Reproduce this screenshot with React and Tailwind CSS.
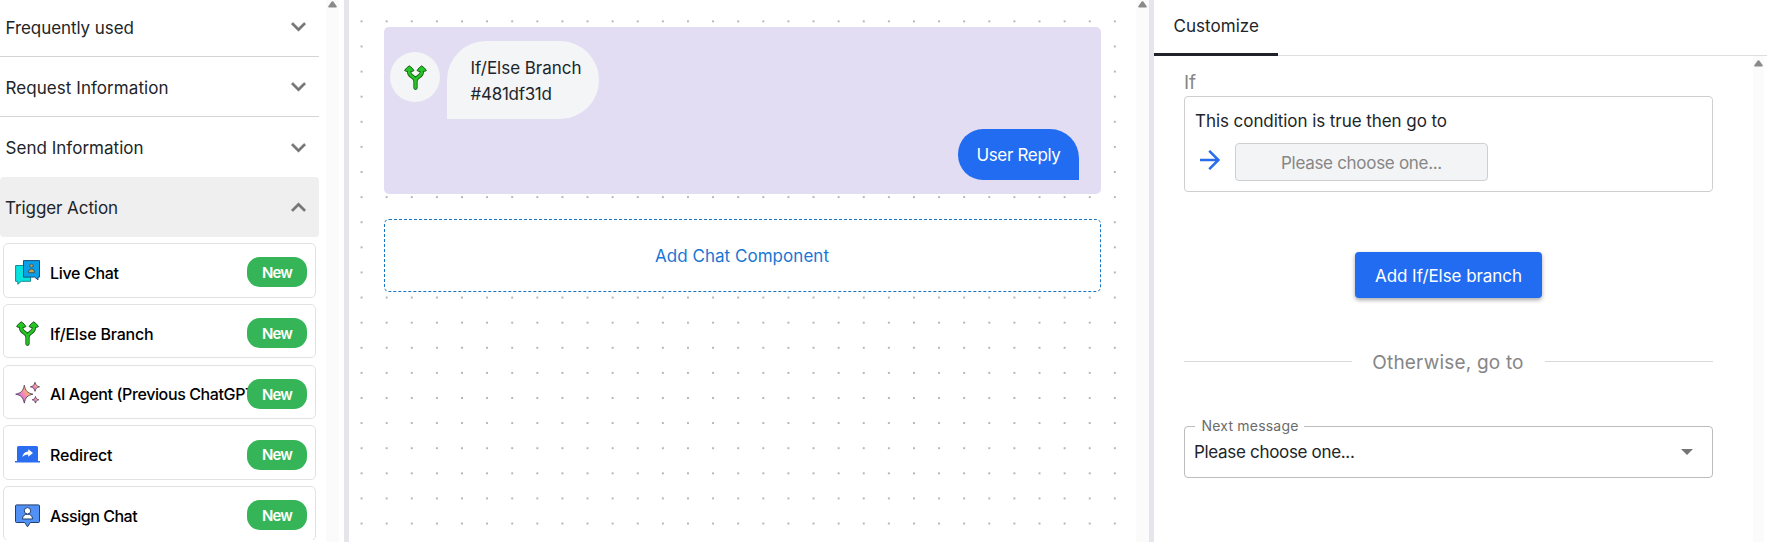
import React from "react";

function Chevron({ up }) {
  return (
    <svg
      viewBox="0 0 24 24"
      className={up ? "size-[29px] rotate-180" : "size-[29px]"}
      fill="#757575"
      stroke="#757575"
      strokeWidth=".4"
    >
      <path d="M16.59 8.59 12 13.17 7.41 8.59 6 10l6 6 6-6z" />
    </svg>
  );
}

function BranchIcon() {
  return (
    <svg viewBox="0 0 25 25" className="size-[25px] shrink-0" fill="none" strokeLinejoin="round">
      <path d="M12.500 22.800v-7.300M6.200 5.500v1.800c0 4.600 6.300 4 6.300 9M18.800 5.500v1.800c0 4.600-6.300 4-6.300 9" stroke="#1c5a1c" strokeWidth="4.300" strokeLinecap="round" />
      <path d="M1.600 5.500Q3 3 6.300.8 9.500 3 11 5.500q-1.500 1.500-4.700.8-3.200.7-4.700-.8zM23.400 5.500Q22 3 18.700.8 15.500 3 14 5.500q1.500 1.500 4.700.8 3.200.7 4.700-.8z" fill="#27c627" stroke="#1c5a1c" strokeWidth="1" />
      <path d="M12.500 22.800v-7.300M6.200 5v2.300c0 4.600 6.300 4 6.300 9M18.800 5v2.300c0 4.600-6.300 4-6.300 9" stroke="#27c627" strokeWidth="2.500" strokeLinecap="round" />
    </svg>
  );
}

function LiveChatIcon() {
  return (
    <svg viewBox="0 0 25 25" className="mt-px size-[25px] shrink-0" strokeLinejoin="round">
      <path d="M.6 5.500h15v15.800H6.200L2.800 24.300v-3H.6z" fill="#06e3dd" stroke="#1a8794" strokeWidth="1" />
      <path d="M8.500.6h16v16.500H23v2.700l-3.400-2.700H8.500z" fill="#0b9fe8" stroke="#14507e" strokeWidth="1" />
      <circle cx="16.500" cy="5.700" r="1.700" fill="#b3a45c" stroke="#34505c" strokeWidth=".8" />
      <path d="M13.500 12.700c0-2.300.8-3.700 3-3.700s3 1.400 3 3.700z" fill="#c0aa50" stroke="#34505c" strokeWidth=".9" />
    </svg>
  );
}

function SparkleIcon() {
  return (
    <svg viewBox="0 0 25 25" className="size-[25px] shrink-0" stroke="#4a3450" strokeWidth=".8" strokeLinejoin="round">
      <defs>
        <linearGradient id="sparkle" x1=".1" y1=".8" x2=".9" y2=".2">
          <stop offset=".1" stopColor="#c06cf5" />
          <stop offset=".45" stopColor="#f087b4" />
          <stop offset=".85" stopColor="#ffc860" />
        </linearGradient>
      </defs>
      <path d="M9.300 4.300c1.300 5.900 3 7.600 8.600 8.900-5.600 1.300-7.300 3-8.600 8.900-1.300-5.900-3-7.600-8.600-8.900 5.600-1.300 7.300-3 8.600-8.900z" fill="url(#sparkle)" />
      <path d="M20 1.300c.7 2.800 1.700 3.800 4.500 4.500-2.800.7-3.800 1.700-4.500 4.500-.7-2.800-1.700-3.800-4.500-4.500 2.800-.7 3.800-1.700 4.500-4.500z" fill="url(#sparkle)" />
      <path d="M20.500 15.500c.5 2.100 1.200 2.800 3.300 3.300-2.100.5-2.800 1.200-3.300 3.300-.5-2.100-1.200-2.800-3.300-3.300 2.100-.5 2.800-1.200 3.300-3.300z" fill="url(#sparkle)" />
    </svg>
  );
}

function RedirectIcon() {
  return (
    <svg viewBox="0 0 25 25" className="size-[25px] shrink-0">
      <path d="M3.500 4h18A1.500 1.500 0 0 1 23 5.500V19h2v1.600H0V19h2V5.500A1.500 1.500 0 0 1 3.500 4z" fill="#2a6df0" />
      <path d="M13.200 7.200 18 11l-4.800 3.800v-2.400c-2.800 0-4.500.8-5.900 2.800.4-3.400 2.500-5.400 5.900-5.700z" fill="#fff" />
    </svg>
  );
}

function AssignIcon() {
  return (
    <svg viewBox="0 0 25 25" className="mt-[2px] size-[25px] shrink-0" stroke="#243f6e" strokeWidth="1" strokeLinejoin="round">
      <path d="M1.500.9h22a1 1 0 0 1 1 1v15.600a1 1 0 0 1-1 1h-8.200l-2.800 4.300-2.800-4.300H1.500a1 1 0 0 1-1-1V1.900a1 1 0 0 1 1-1z" fill="#5190f4" />
      <path d="M7.500 15c0-3 1.800-4.800 5-4.800s5 1.800 5 4.800z" fill="#fff" />
      <circle cx="12.500" cy="6.800" r="3.200" fill="#fff" />
    </svg>
  );
}

function ScrollArrow() {
  return (
    <svg viewBox="0 0 9 7" className="h-[7px] w-[9px]" fill="#8a8a8a">
      <path d="M3.700.6Q4.500-.3 5.300.6L8.700 5.200Q9 6.500 8 6.500H1Q0 6.500.3 5.200z" />
    </svg>
  );
}

const sections = [
  { label: "Frequently used", tracking: "tracking-[-0.07px]" },
  { label: "Request Information", tracking: "tracking-[0.06px]" },
  { label: "Send Information", tracking: "tracking-[0.03px]" },
];

const actions = [
  { label: "Live Chat", Icon: LiveChatIcon, tracking: "tracking-[-0.32px]" },
  { label: "If/Else Branch", Icon: BranchIcon, tracking: "tracking-[-0.19px]" },
  { label: "AI Agent (Previous ChatGPT)", Icon: SparkleIcon, tracking: "tracking-[-0.38px]" },
  { label: "Redirect", Icon: RedirectIcon, tracking: "tracking-[-0.14px]" },
  { label: "Assign Chat", Icon: AssignIcon, tracking: "tracking-[-0.46px]" },
];

function Sidebar() {
  return (
    <aside className="flex h-full w-[349px] shrink-0 border-r-[5px] border-[#e5e5eb]">
      <div className="h-full w-[319px] overflow-hidden">
        <div className="-mt-[3px]">
          {sections.map((s, i) => (
            <div
              key={s.label}
              className={
                "flex h-[60px] items-center justify-between pr-[6px] pl-[5.500px] " +
                (i < 2 ? "border-b border-[#d4d4d4]" : "")
              }
            >
              <span className={"pt-[2px] text-[17px] leading-6 " + s.tracking}>{s.label}</span>
              <Chevron />
            </div>
          ))}
          <div className="flex h-[60px] items-center justify-between rounded bg-[#efefef] pr-[6px] pl-[5px]">
            <span className="pt-[2px] text-[17px] leading-6 tracking-[-0.08px]">Trigger Action</span>
            <Chevron up />
          </div>
        </div>
        <div className="mr-[3px] ml-[3px] flex h-[303px] flex-col gap-[6.300px] overflow-hidden pt-[6px]">
          {actions.map(({ label, Icon, tracking }) => (
            <div
              key={label}
              className="flex h-[54.500px] shrink-0 items-center rounded-[5px] border border-[#e2e2e4] pr-[8px] pl-[11px]"
            >
              <div className="flex w-[232px] shrink-0 items-center gap-[10px] pt-[4px]">
                <Icon />
                <span className={"pt-[1px] text-[16px] leading-6 font-medium whitespace-nowrap text-black " + tracking}>
                  {label}
                </span>
              </div>
              <span className="relative mt-[4px] flex h-[30px] w-[60px] shrink-0 items-center justify-center rounded-[13px] bg-[#35b558] pt-[2px] text-[15px] font-semibold tracking-[-0.800px] text-white">
                New
              </span>
            </div>
          ))}
        </div>
      </div>
      <div className="ml-[7px] flex w-[13px] justify-center bg-[#fbfbfb] pt-[1px]">
        <ScrollArrow />
      </div>
    </aside>
  );
}

function Canvas() {
  return (
    <main className="flex h-full w-[805px] shrink-0 border-r-[5px] border-[#e5e5eb]">
      <div className="h-full w-[787px] bg-[radial-gradient(circle,#b4b4b4_0.9px,transparent_1.300px)] bg-[length:25.110px_25.110px] bg-[position:0_8.800px] pt-[27px] pr-[35px] pl-[35px]">
        <section className="flex h-[167px] flex-col rounded-[5px] bg-[#e3ddf3] pt-[14px] pr-[22px] pb-[14px] pl-[6px]">
          <div className="flex items-start gap-[7px]">
            <div className="mt-[11px] flex size-[50px] items-center justify-center rounded-full bg-[#f3f5f6]">
              <BranchIcon />
            </div>
            <div className="h-[78px] w-[152px] rounded-[39px] rounded-bl-none bg-[#f3f5f6] pt-[14px] pl-[23.500px] text-[17px] leading-[26px]">
              <div className="tracking-[-0.03px]">If/Else Branch</div>
              <div className="tracking-[-0.290px]">#481df31d</div>
            </div>
          </div>
          <div className="mt-[10px] ml-auto flex h-[51px] w-[121px] shrink-0 items-center justify-center rounded-l-[25px] rounded-tr-[29px] bg-[#226cf2] pt-[2px] text-[17px] tracking-[-0.330px] text-white">
            User Reply
          </div>
        </section>
        <button className="mt-[25px] flex h-[73px] w-full items-center justify-center rounded-[5px] border border-dashed border-[#1976c2] bg-white pt-[2px] pr-px text-[17px] tracking-[0.040px] text-[#1976d2]">
          Add Chat Component
        </button>
      </div>
      <div className="flex w-[13px] justify-center bg-[#fbfbfb] pt-[1px]">
        <ScrollArrow />
      </div>
    </main>
  );
}

function Customize() {
  return (
    <section className="flex h-full min-w-0 flex-1 flex-col">
      <div className="flex h-[56px] shrink-0 items-end border-b border-[#dedede]">
        <div className="-mb-px flex h-full w-[124px] flex-col border-b-[3px] border-[#1f2228] pt-[13px] pl-[19.500px] text-[17px] leading-6 tracking-[0.040px]">
          Customize
        </div>
      </div>
      <div className="flex min-h-0 flex-1">
        <div className="h-full w-[599px] pt-[13px] pr-[40px] pl-[30px]">
          <div className="h-[27px] text-[19px] leading-[27px] text-[#868686]">If</div>
          <div className="h-[96px] rounded-[4px] border border-[#cfcfcf] pt-[12px] pl-[10px]">
            <div className="text-[17px] leading-6 tracking-[-0.06px]">This condition is true then go to</div>
            <div className="mt-[10px] flex items-center">
              <svg viewBox="0 0 20 20" className="mt-[-4px] ml-[5px] size-[20px]" fill="none" stroke="#2a6de8" strokeWidth="2.500">
                <path d="M0 10h18.500M9.200.8l9.200 9.200-9.200 9.200" />
              </svg>
              <div className="ml-[15px] flex h-[38px] w-[253px] items-center justify-center rounded-[4px] border border-[#cfcfcf] bg-[#f3f4f6] pt-[4px] text-[17px] tracking-[-0.300px] text-[#868686]">
                Please choose one...
              </div>
            </div>
          </div>
          <button className="mx-auto mt-[60px] flex h-[46px] w-[187px] items-center justify-center rounded-[4px] bg-[#226cf2] pt-[3px] text-[17px] tracking-[-0.06px] text-white shadow-[0_2px_4px_rgba(0,0,0,0.350)]">
            Add If/Else branch
          </button>
          <div className="mt-[49px] flex h-[28px] items-center">
            <div className="h-px flex-1 bg-[#d9d9d9]" />
            <span className="w-[193px] pt-[3px] pr-px text-center text-[19px] leading-[28px] tracking-[0.200px] text-[#868686]">
              Otherwise, go to
            </span>
            <div className="h-px flex-1 bg-[#d9d9d9]" />
          </div>
          <fieldset className="mt-[41px] h-[62px] rounded-[4px] border border-[#bcbcbc] pl-[9px]">
            <legend className="ml-px h-[20px] pr-[5.500px] pl-[6.500px] text-[14px] leading-[20px] tracking-[0.200px] text-[#6b6b6b]">
              Next message
            </legend>
            <div className="flex h-[32px] items-center justify-between pr-[19px]">
              <span className="pt-[2px] text-[17px] tracking-[-0.320px]">Please choose one...</span>
              <svg viewBox="0 0 12 6" className="h-[6px] w-[12px]" fill="#757575">
                <path d="M0 0h12L6 6z" />
              </svg>
            </div>
          </fieldset>
        </div>
        <div className="flex w-[11px] justify-center bg-[#fbfbfb] pt-[4px]">
          <ScrollArrow />
        </div>
      </div>
    </section>
  );
}

export default function App() {
  return (
    <div className="flex h-[542px] w-[1767px] overflow-hidden bg-white font-['Inter',sans-serif] text-[#212529]">
      <Sidebar />
      <Canvas />
      <Customize />
    </div>
  );
}
